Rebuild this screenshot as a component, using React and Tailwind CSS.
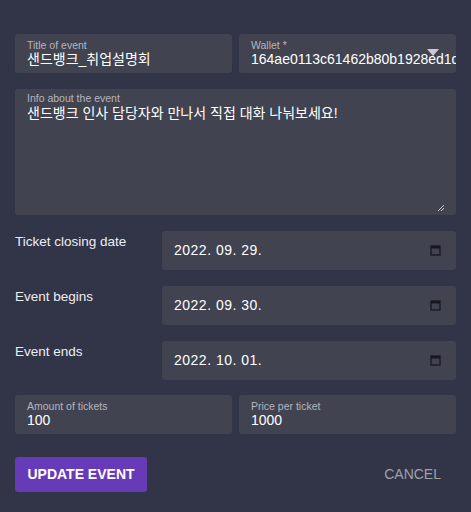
import React from "react";

const font = { fontFamily: '"Liberation Sans", Arial, "Noto Sans CJK KR", sans-serif' };

const Field = ({ label, value, select }) => (
  <div className="relative h-[39px] overflow-hidden rounded-[3px] bg-[#414351] pl-[12px] pt-[5px]">
    <div className="text-[10.5px] leading-[12px] text-[#b4b5bf]">{label}</div>
    <div className="whitespace-nowrap text-[14px] leading-[17px] text-white">{value}</div>
    {select && (
      <span className="absolute right-[17px] top-[15px] h-0 w-0 border-x-[6px] border-t-[7px] border-x-transparent border-t-[#c9cad2]" />
    )}
  </div>
);

const CalendarIcon = () => (
  <svg width="11" height="11" viewBox="0 0 11 11">
    <rect x="1" y="1" width="9" height="9" fill="none" stroke="#17181f" strokeWidth="1.3" />
    <rect x="1" y="1" width="9" height="2.5" fill="#17181f" />
  </svg>
);

const DateRow = ({ label, value }) => (
  <div className="flex">
    <div className="w-[147px] pt-[3px] text-[13.5px] leading-[16px] text-[#eeeef2]">{label}</div>
    <div className="flex h-[39px] flex-1 items-center justify-between rounded-[3px] bg-[#414351] pl-[12px] pr-[15px]">
      <span className="text-[14px] tracking-[0.5px] text-white">{value}</span>
      <CalendarIcon />
    </div>
  </div>
);

export default function App() {
  return (
    <div className="min-h-[512px] w-full bg-[#323447] px-[15px] pt-[34px]" style={font}>
      <div className="grid grid-cols-2 gap-[7px]">
        <Field label="Title of event" value="샌드뱅크_취업설명회" />
        <Field label="Wallet *" value="164ae0113c61462b80b1928ed1d3e7f2" select />
      </div>

      <div className="relative mt-[16px] h-[126px] rounded-[3px] bg-[#414351] pl-[12px] pt-[3px]">
        <div className="text-[10.5px] leading-[12px] text-[#b4b5bf]">Info about the event</div>
        <div className="text-[14px] leading-[18px] text-white">
          샌드뱅크 인사 담당자와 만나서 직접 대화 나눠보세요!
        </div>
        <svg className="absolute bottom-[3px] right-[11px]" width="8" height="8" viewBox="0 0 8 8">
          <path d="M1 7 L7 1 M4 7 L7 4" stroke="#c9cad2" strokeWidth="1" />
        </svg>
      </div>

      <div className="mt-[16px] flex flex-col gap-[16px]">
        <DateRow label="Ticket closing date" value="2022. 09. 29." />
        <DateRow label="Event begins" value="2022. 09. 30." />
        <DateRow label="Event ends" value="2022. 10. 01." />
      </div>

      <div className="mt-[15px] grid grid-cols-2 gap-[7px]">
        <Field label="Amount of tickets" value="100" />
        <Field label="Price per ticket" value="1000" />
      </div>

      <div className="mt-[23px] flex items-center justify-between">
        <button className="h-[35px] w-[132px] rounded-[3px] bg-[#673ab7] text-[14px] font-bold text-white">
          UPDATE EVENT
        </button>
        <button className="pr-[15px] text-[14px] text-[#a0a1ab]">CANCEL</button>
      </div>
    </div>
  );
}
